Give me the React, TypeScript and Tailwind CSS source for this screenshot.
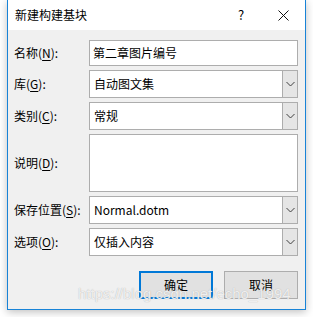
import React from "react";

const FONT = "font-['Microsoft_YaHei','Noto_Sans_CJK_SC',sans-serif]";

function Label({ text, mnemonic }: { text: string; mnemonic: string }) {
  return (
    <span className="text-[12px] text-black leading-none whitespace-nowrap">
      {text}(<span className="underline underline-offset-2">{mnemonic}</span>):
    </span>
  );
}

function Chevron() {
  return (
    <svg width="9" height="6" viewBox="0 0 9 6" className="block">
      <path d="M0.5 1 L4.5 5 L8.5 1" fill="none" stroke="#404040" strokeWidth="1" />
    </svg>
  );
}

function Select({ value }: { value: string }) {
  return (
    <div className="h-[28px] flex border border-[#adadad] bg-white">
      <div className="flex-1 flex items-center pl-[4px] text-[12px] text-black">{value}</div>
      <div className="w-[15px] bg-[#e5e5e5] border-l border-[#adadad] flex items-center justify-center">
        <Chevron />
      </div>
    </div>
  );
}

const ROWS = [
  { text: "库", m: "G", value: "自动图文集" },
  { text: "类别", m: "C", value: "常规" },
];

export default function App() {
  return (
    <div className={`w-[313px] h-[317px] bg-white relative overflow-hidden ${FONT}`}>
      <div className="absolute left-[7px] top-0 w-[299px] h-[310px] border border-t-0 border-[#1883d7] bg-[#f0f0f0] flex flex-col shadow-[0_2px_8px_rgba(0,0,0,0.25)]">
        {/* title bar */}
        <div className="h-[30px] bg-white flex items-center pl-[7px] text-[12px] text-black">
          <span className="flex-1">新建构建基块</span>
          <span className="w-[20px] text-center text-[13px] mr-[27px]">?</span>
          <svg width="11" height="11" viewBox="0 0 11 11" className="mr-[16px]">
            <path d="M0.5 0.5 L10.5 10.5 M10.5 0.5 L0.5 10.5" stroke="#111" strokeWidth="1" />
          </svg>
        </div>

        <div className="grid grid-cols-[75px_1fr] gap-y-[4px] pl-[6px] pr-[7px] pt-[10px] items-center">
          <Label text="名称" mnemonic="N" />
          <div className="h-[26px] border border-[#adadad] bg-white flex items-center pl-[3px] text-[12px] text-black">
            第二章图片编号
          </div>

          {ROWS.map((r) => (
            <React.Fragment key={r.m}>
              <Label text={r.text} mnemonic={r.m} />
              <Select value={r.value} />
            </React.Fragment>
          ))}

          <Label text="说明" mnemonic="D" />
          <div className="h-[58px] border border-[#adadad] bg-white" />

          <Label text="保存位置" mnemonic="S" />
          <Select value="Normal.dotm" />

          <Label text="选项" mnemonic="O" />
          <Select value="仅插入内容" />
        </div>

        <div className="flex justify-end gap-[11px] pr-[7px] mt-[15px]">
          <button className="w-[74px] h-[28px] bg-[#e1e1e1] border-2 border-[#0078d7] text-[12px] text-black">
            确定
          </button>
          <button className="w-[74px] h-[28px] bg-[#e1e1e1] border border-[#adadad] text-[12px] text-black">
            取消
          </button>
        </div>
      </div>

      {/* watermark */}
      <div className="absolute left-[78px] top-[284px] text-[15px] leading-[20px] font-['Liberation_Sans',sans-serif] text-white/80 [text-shadow:0_0_1px_#a0a0a0] whitespace-nowrap">
        https://blog.csdn.net/echo_1994
      </div>
    </div>
  );
}
